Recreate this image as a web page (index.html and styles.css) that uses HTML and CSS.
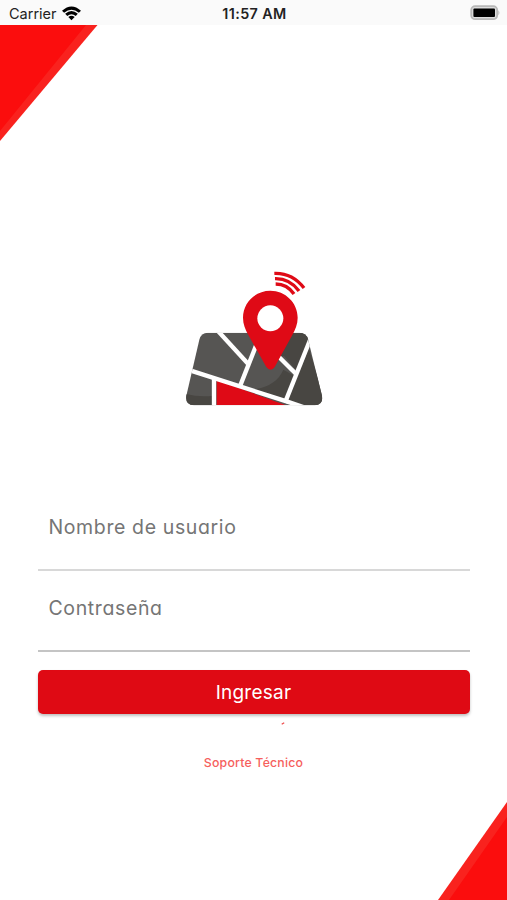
FILE: index.html
```
<!DOCTYPE html>
<html lang="es">

<head>
    <meta charset="utf-8" />
    <meta name="viewport" content="width=device-width, initial-scale=1">
    <title>Ingresar</title>
    <link rel="stylesheet" href="styles.css">
</head>

<body>
    <header class="status-bar">
        <div class="carrier">
            <span class="carrier-name">Carrier</span>
            <svg class="wifi" viewBox="0 0 54 42">
                <path d="M0 13 Q27 -11 54 13 L48 19 Q27 2 6 19 Z" />
                <path d="M9 22 Q27 6 45 22 L39 28 Q27 18 15 28 Z" />
                <path d="M18 31 Q27 24 36 31 L27 40 Z" />
            </svg>
        </div>
        <span class="time">11:57 AM</span>
        <svg class="battery" viewBox="0 0 30 16">
            <rect x="1.2" y="1.2" width="26" height="13" rx="4" fill="#ddd" stroke="#b8b8b8" stroke-width="1.8" />
            <rect x="3.4" y="3.4" width="21.6" height="8.6" rx="1" />
            <path d="M28.4 5.2 Q30.4 7.7 28.4 10.2 Z" fill="#b8b8b8" />
        </svg>
    </header>

    <main class="login">
        <svg class="corner corner-top" viewBox="0 0 98 116">
            <path d="M0 0 H97.5 L0 116 Z" fill="#f9221e" />
            <path d="M0 0 H86 L0 106 Z" fill="#fb0d0d" />
        </svg>

        <svg class="logo" viewBox="0 0 510 480">
            <defs>
                <clipPath id="map">
                    <path d="M114 218 H388 Q409 218 414 238 L456 407 Q461 435 434 436 H72 Q45 435 49 407 L88 239 Q93 218 114 218 Z" />
                </clipPath>
            </defs>
            <g clip-path="url(#map)">
                <rect x="40" y="210" width="430" height="230" fill="#565553" />
                <path d="M40 400 Q85 413 130 407 V440 H40 Z M258 387 Q320 376 340 329 L373 347 L342 424 Z M327 292 L355 218 H415 V250 L378 330 L342 288 Z M417 266 L350 425 L400 440 H470 Z" fill="#484642" />
                <path d="M140 360 L348 436 H140 Z" fill="#df0a16" />
                <g fill="none" stroke="#fff" stroke-width="13">
                    <path d="M60 331 L352 425 L400 441" />
                    <path d="M132 354 V440" />
                    <path d="M144 213 L234 311" />
                    <path d="M268 232 L211 376" />
                    <path d="M315 279 L376 340" />
                    <path d="M420 240 L345 428" />
                </g>
            </g>
            <path d="M301 92 C346 92 383 128 383 173 C383 192 376 209 367 225 L314 321 Q302 338 289 321 L235 225 C226 209 219 192 219 173 C219 128 256 92 301 92 Z" fill="#df0a16" />
            <circle cx="301" cy="175" r="39" fill="#fff" />
            <g fill="none" stroke="#df0a16" stroke-width="10">
                <path d="M313 40 Q367 38 402 84" />
                <path d="M315 56 Q359 55 387 93" />
                <path d="M317 72 Q351 72 372 102" />
            </g>
        </svg>

        <form class="form">
            <label class="field field-user">
                <input type="text" name="usuario" placeholder="Nombre de usuario">
            </label>
            <label class="field field-pass">
                <input type="password" name="clave" placeholder="Contraseña">
            </label>
            <button type="button" class="submit">Ingresar</button>
        </form>

        <svg class="tick" viewBox="0 0 4 3">
            <path d="M.7 2.3 L3.2 .7" stroke="#ef4a4a" stroke-width="1.2" />
        </svg>
        <a class="support">Soporte Técnico</a>

        <svg class="corner corner-bottom" viewBox="0 0 69 98">
            <path d="M69 0 V98 H0 Z" fill="#f9221e" />
            <path d="M69 15 V98 H11 Z" fill="#fb0d0d" />
        </svg>
    </main>
</body>

</html>
```
FILE: styles.css
```
*,
*::before,
*::after {
    margin: 0;
    padding: 0;
    box-sizing: border-box;
}

body {
    height: 100vh;
    display: flex;
    flex-direction: column;
    background: #fff;
    font-family: Inter, "Liberation Sans", sans-serif;
    overflow: hidden;
}

svg {
    display: block;
}

.status-bar {
    height: 25px;
    flex: none;
    padding: 1px 7px 0 9px;
    display: grid;
    grid-template-columns: 1fr auto 1fr;
    align-items: center;
    background: #fafafa;
    color: #222;
}

.carrier {
    display: flex;
    align-items: center;
    gap: 5px;
}

.carrier-name {
    font-size: 14.5px;
}

.wifi {
    width: 19px;
    height: 15px;
}

.time {
    font-size: 14.3px;
    font-weight: 600;
    letter-spacing: .4px;
}

.battery {
    width: 30px;
    height: 16px;
    justify-self: end;
}

.login {
    position: relative;
    flex: 1;
    display: flex;
    flex-direction: column;
    align-items: center;
}

.corner {
    position: absolute;
}

.corner-top {
    top: 0;
    left: 0;
    width: 98px;
    height: 116px;
}

.corner-bottom {
    right: 0;
    bottom: 0;
    width: 69px;
    height: 98px;
}

.logo {
    width: 170px;
    height: 160px;
    margin-top: 235px;
    margin-left: 3px;
}

.form {
    width: 432px;
    margin-top: 81px;
    display: flex;
    flex-direction: column;
}

.field {
    display: block;
    border-bottom: 2px solid #d8d8d8;
}

.field input {
    width: 100%;
    height: 52px;
    padding: 0 11px;
    display: block;
    border: none;
    outline: none;
    background: none;
    font-family: inherit;
    font-size: 19.5px;
    letter-spacing: .62px;
    font-feature-settings: "cv11";
}

.field input::placeholder {
    color: #757575;
    opacity: 1;
}

.field-user {
    height: 70px;
}

.field-pass {
    height: 81px;
    padding-top: 11px;
    border-color: #c4c4c4;
}

.submit {
    height: 44px;
    margin-top: 18px;
    padding-top: 1px;
    border: none;
    border-radius: 5px;
    background: #df0a14;
    box-shadow: 0 2px 3px rgba(0, 0, 0, .25);
    color: #fff;
    font-family: inherit;
    font-size: 19px;
    letter-spacing: .25px;
}

.tick {
    width: 4px;
    height: 3px;
    margin: 8px 0 0 58px;
}

.support {
    margin-top: 29px;
    color: #f65f5d;
    font-size: 12.3px;
    font-weight: 500;
    line-height: 18px;
    letter-spacing: .2px;
    font-feature-settings: "cv11";
}
```
